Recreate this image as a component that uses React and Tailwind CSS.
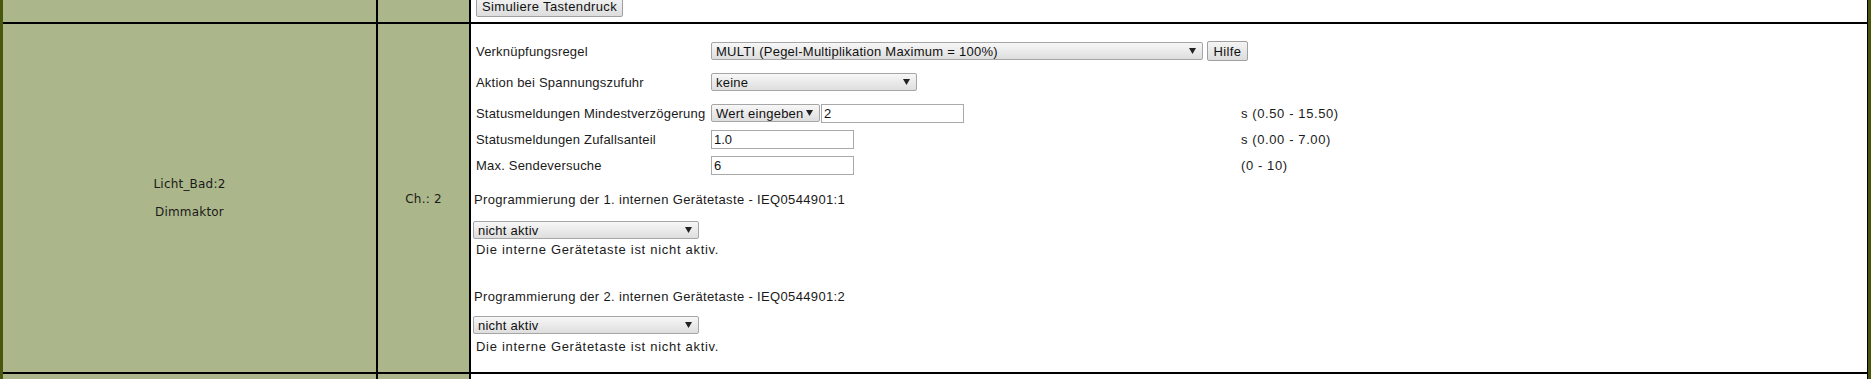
import React from "react";

const F3 = { fontFamily: '"Liberation Sans", Arial, sans-serif' };
const F1 = { fontFamily: '"DejaVu Sans", Verdana, sans-serif' };

function Arrow() {
  return (
    <svg width="7" height="6" viewBox="0 0 7 6" className="shrink-0">
      <polygon points="0,0 7,0 3.5,6" fill="#222" />
    </svg>
  );
}

function Select({ w, text }) {
  return (
    <div
      className={`flex h-[18px] items-center justify-between rounded-[2px] border border-[#a6a6a6] bg-gradient-to-b from-[#f7f7f7] to-[#dedede] pl-[4px] pr-[6px] text-[13px] leading-none tracking-[0.25px] text-[#111] ${w}`}
    >
      <span className="whitespace-nowrap">{text}</span>
      <Arrow />
    </div>
  );
}

function Input({ w, value }) {
  return (
    <div
      className={`flex h-[19px] items-center border border-[#a9a9a9] bg-white pl-[2px] text-[13px] leading-none text-[#111] ${w}`}
    >
      {value}
    </div>
  );
}

function Button({ w, h, text }) {
  return (
    <div
      className={`flex shrink-0 items-center justify-center rounded-[2px] border border-[#a0a0a0] bg-gradient-to-b from-[#f4f4f4] to-[#dddddd] text-[13px] leading-none tracking-[0.35px] text-[#111] ${w} ${h}`}
    >
      {text}
    </div>
  );
}

function Row({ children, top }) {
  return (
    <div className={`flex h-[22px] items-center ${top}`}>{children}</div>
  );
}

function Label({ children }) {
  return (
    <div className="w-[235px] shrink-0 whitespace-nowrap text-[13px] leading-none tracking-[0.2px] text-[#1a1a1a]">
      {children}
    </div>
  );
}

function Unit({ children }) {
  return (
    <div className="whitespace-nowrap text-[13px] leading-none tracking-[0.6px] text-[#1a1a1a]">
      {children}
    </div>
  );
}

function TableRow({ h, c1, c2, c3 }) {
  return (
    <div className={`flex ${h}`}>
      <div className="w-[373px] shrink-0 bg-[#abb78a]">{c1}</div>
      <div className="w-[2px] shrink-0 bg-black" />
      <div className="w-[91px] shrink-0 bg-[#abb78a]">{c2}</div>
      <div className="w-[2px] shrink-0 bg-black" />
      <div className="min-w-0 flex-1 bg-white">{c3}</div>
    </div>
  );
}

export default function App() {
  return (
    <div className="flex h-[379px] w-[1871px] overflow-hidden bg-white">
      <div className="w-[3px] shrink-0 bg-[#48560e]" />
      <div className="flex w-[1864px] shrink-0 flex-col">
        <TableRow
          h="h-[22px] overflow-hidden"
          c1={null}
          c2={null}
          c3={
            <div className="flex h-full items-end pb-[5px] pl-[5px]" style={F3}>
              <Button w="w-[147px]" h="h-[21px]" text="Simuliere Tastendruck" />
            </div>
          }
        />
        <div className="h-[2px] bg-black" />
        <TableRow
          h="h-[348px]"
          c1={
            <div
              className="flex h-full flex-col items-center justify-center gap-[12px] text-[12px] leading-[16px] tracking-[0.2px] text-[#1a1a1a]"
              style={F1}
            >
              <div>Licht_Bad:2</div>
              <div>Dimmaktor</div>
            </div>
          }
          c2={
            <div
              className="flex h-full items-center justify-center pt-[2px] text-[12px] leading-[16px] tracking-[0.2px] text-[#1a1a1a]"
              style={F1}
            >
              Ch.: 2
            </div>
          }
          c3={
            <div className="flex flex-col" style={F3}>
              <div className="flex flex-col pl-[5px]">
                <Row top="mt-[16px]">
                  <Label>Verknüpfungsregel</Label>
                  <Select w="w-[492px]" text="MULTI (Pegel-Multiplikation Maximum = 100%)" />
                  <div className="ml-[4px]">
                    <Button w="w-[41px]" h="h-[20px]" text="Hilfe" />
                  </div>
                </Row>
                <Row top="mt-[9px]">
                  <Label>Aktion bei Spannungszufuhr</Label>
                  <Select w="w-[206px]" text="keine" />
                </Row>
                <Row top="mt-[9px]">
                  <Label>Statusmeldungen Mindestverzögerung</Label>
                  <div className="flex w-[530px] shrink-0 items-center">
                    <Select w="w-[109px]" text="Wert eingeben" />
                    <div className="ml-px">
                      <Input w="w-[143px]" value="2" />
                    </div>
                  </div>
                  <Unit>s (0.50 - 15.50)</Unit>
                </Row>
                <Row top="mt-[4px]">
                  <Label>Statusmeldungen Zufallsanteil</Label>
                  <div className="flex w-[530px] shrink-0 items-center">
                    <Input w="w-[143px]" value="1.0" />
                  </div>
                  <Unit>s (0.00 - 7.00)</Unit>
                </Row>
                <Row top="mt-[4px]">
                  <Label>Max. Sendeversuche</Label>
                  <div className="flex w-[530px] shrink-0 items-center">
                    <Input w="w-[143px]" value="6" />
                  </div>
                  <Unit>(0 - 10)</Unit>
                </Row>
              </div>

              <div className="flex flex-col pl-[3px] text-[13px] leading-[16px] text-[#1a1a1a]">
                <div className="mt-[16px] whitespace-nowrap tracking-[0.35px]">
                  Programmierung der 1. internen Gerätetaste - IEQ0544901:1
                </div>
                <div className="ml-[-1px] mt-[13px]">
                  <Select w="w-[226px]" text="nicht aktiv" />
                </div>
                <div className="ml-[2px] mt-[3px] whitespace-nowrap tracking-[0.7px]">
                  Die interne Gerätetaste ist nicht aktiv.
                </div>
                <div className="mt-[31px] whitespace-nowrap tracking-[0.35px]">
                  Programmierung der 2. internen Gerätetaste - IEQ0544901:2
                </div>
                <div className="ml-[-1px] mt-[11px]">
                  <Select w="w-[226px]" text="nicht aktiv" />
                </div>
                <div className="ml-[2px] mt-[5px] whitespace-nowrap tracking-[0.7px]">
                  Die interne Gerätetaste ist nicht aktiv.
                </div>
              </div>
            </div>
          }
        />
        <div className="h-[2px] bg-black" />
        <TableRow h="flex-1" c1={null} c2={null} c3={null} />
      </div>
      <div className="w-px shrink-0 bg-black" />
      <div className="w-[3px] shrink-0 bg-[#48560e]" />
    </div>
  );
}
